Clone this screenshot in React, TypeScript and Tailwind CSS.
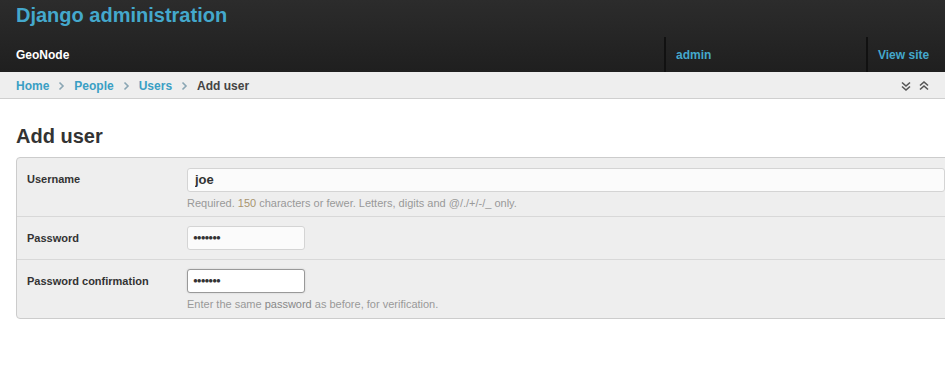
export default function App() {
  const font = { fontFamily: '"Liberation Sans", Arial, sans-serif' };
  return (
    <div className="relative h-[387px] w-[945px] overflow-hidden bg-white text-[#333]" style={font}>
      {/* ── HEADER ── */}
      <div className="bg-gradient-to-b from-[#2c2c2c] to-[#1f1f1f]">
        <div className="h-[37px] px-4 pt-[3px] text-[20px] font-bold leading-6 text-[#44a8cc]">
          Django administration
        </div>
        <div className="flex h-[35px] items-center text-[12px] font-bold">
          <div className="flex-1 px-4 text-white">GeoNode</div>
          <div className="flex h-full w-[202px] items-center border-l-2 border-[#111] pl-[10px] text-[#44a8cc]">
            admin
          </div>
          <div className="flex h-full w-[79px] items-center border-l-2 border-[#111] pl-[10px] text-[#44a8cc]">
            View site
          </div>
        </div>
      </div>

      {/* ── BREADCRUMBS ── */}
      <div className="flex h-[27px] items-center border-b border-[#cfcfcf] bg-[#eeeeee] px-4 pt-[1px] text-[12px] font-bold">
        <span className="text-[#3a9fc4]">Home</span>
        <Chevron />
        <span className="text-[#3a9fc4]">People</span>
        <Chevron />
        <span className="text-[#3a9fc4]">Users</span>
        <Chevron />
        <span className="text-[#444]">Add user</span>
        <div className="ml-auto mr-[-1px] flex items-center gap-[6px] text-[#555]">
          <svg width="12" height="12" viewBox="0 0 12 12" fill="none" stroke="currentColor" strokeWidth="1.6">
            <path d="M2 2.5 L6 6 L10 2.5" />
            <path d="M2 6.5 L6 10 L10 6.5" />
          </svg>
          <svg width="12" height="12" viewBox="0 0 12 12" fill="none" stroke="currentColor" strokeWidth="1.6">
            <path d="M2 5.5 L6 2 L10 5.5" />
            <path d="M2 9.5 L6 6 L10 9.5" />
          </svg>
        </div>
      </div>

      {/* ── CONTENT ── */}
      <div className="pl-4 pt-[25px]">
        <h1 className="mb-[9px] text-[20px] font-bold leading-6 text-[#333]">Add user</h1>

        <div className="w-[1000px] rounded-[4px] border border-[#cccccc] bg-[#eeeeee]">
          <Row
            label="Username"
            pb="pb-[6px]"
            help={<>Required. <span className="text-[#a8946e]">150</span> characters or fewer. Letters, digits and @/./+/-/_ only.</>}
          >
            <input
              readOnly
              value="joe"
              className="h-[24px] w-[758px] rounded-[3px] border border-[#d4d4d4] bg-[#fbfbfb] px-[7px] text-[13px] font-bold text-[#333] outline-none"
              style={font}
            />
          </Row>
          <Row label="Password" border pb="pb-[9px]">
            <Pw focused={false} />
          </Row>
          <Row
            label="Password confirmation"
            border
            pb="pb-[7px]"
            help={<>Enter the same <span className="text-[#888]">password</span> as before, for verification.</>}
          >
            <Pw focused />
          </Row>
        </div>
      </div>
    </div>
  );
}

function Chevron() {
  return (
    <svg className="mx-[8px]" width="9" height="10" viewBox="0 0 9 10" fill="none" stroke="#8aa6b4" strokeWidth="1.6">
      <path d="M2.5 1.5 L6 5 L2.5 8.5" />
    </svg>
  );
}

function Pw({ focused }: { focused: boolean }) {
  return (
    <div
      className={
        focused
          ? 'flex h-[24px] w-[118px] items-center rounded-[3px] border border-[#999] bg-white px-[5px] shadow-[0_0_2px_rgba(0,0,0,0.15)]'
          : 'flex h-[24px] w-[118px] items-center rounded-[3px] border border-[#d4d4d4] bg-[#fbfbfb] px-[5px]'
      }
    >
      <span className="text-[8px] leading-none tracking-[-1px] text-[#333]">●●●●●●●</span>
    </div>
  );
}

function Row({
  label,
  help,
  border,
  pb,
  children,
}: {
  label: string;
  help?: React.ReactNode;
  border?: boolean;
  pb: string;
  children: React.ReactNode;
}) {
  return (
    <div className={`${border ? 'border-t border-[#d8d8d8]' : ''} flex px-[10px] pt-[9px] ${pb}`}>
      <div className="w-[160px] pt-[5px] text-[11px] font-bold leading-[14px] text-[#333]">{label}</div>
      <div>
        {children}
        {help && <div className="mt-[4px] text-[11px] leading-[14px] text-[#999]">{help}</div>}
      </div>
    </div>
  );
}
